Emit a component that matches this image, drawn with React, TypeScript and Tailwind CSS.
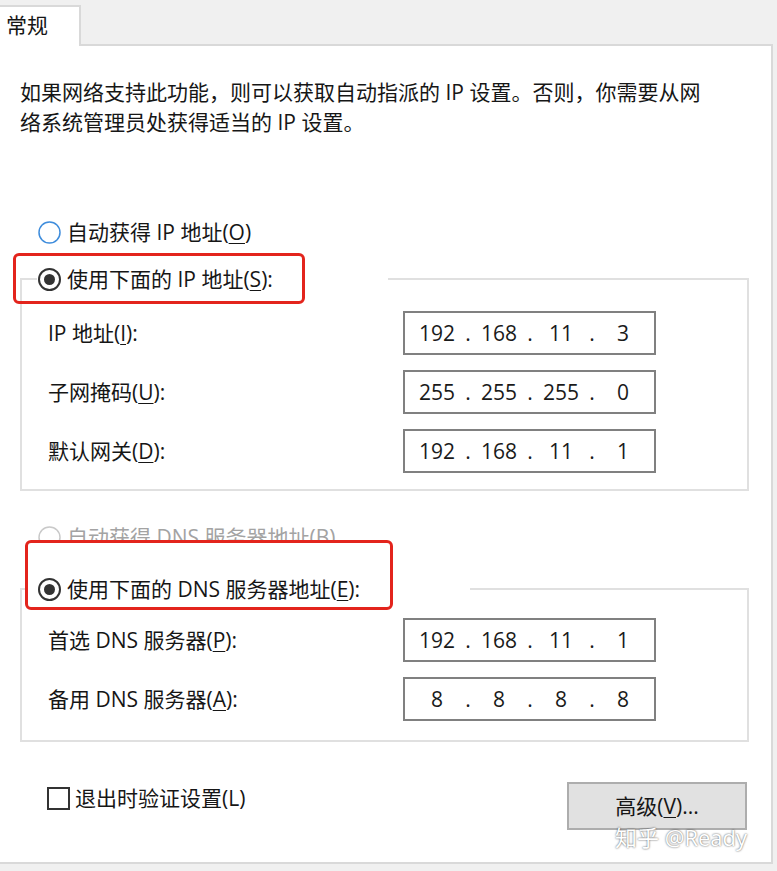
import React from 'react'

type RadioState = 'focus' | 'checked' | 'disabled'

function Radio({ state }: { state: RadioState }) {
  const stroke = state === 'focus' ? '#3f8ddc' : state === 'disabled' ? '#c9c9c9' : '#333333'
  return (
    <svg width="23" height="23" viewBox="0 0 23 23" className="shrink-0">
      <circle cx="11.5" cy="11.5" r="10.5" fill="white" stroke={stroke} strokeWidth={state === 'checked' ? 2 : 1.5} />
      {state === 'checked' && <circle cx="11.5" cy="11.5" r="5.5" fill="#333333" />}
    </svg>
  )
}

function Key({ children }: { children: React.ReactNode }) {
  return <span className="underline decoration-1 underline-offset-[3px]">{children}</span>
}

function IpBox({ parts }: { parts: string[] }) {
  return (
    <div className="flex h-[44px] w-[253px] shrink-0 items-center border-2 border-[#808080] bg-white pl-[4px] text-[#1a1a1a]">
      {parts.map((p, i) => (
        <React.Fragment key={i}>
          {i > 0 && <span className="w-[6px] text-center">.</span>}
          <span className="w-[56px] text-center">{p}</span>
        </React.Fragment>
      ))}
    </div>
  )
}

function Row({ label, parts }: { label: React.ReactNode; parts: string[] }) {
  return (
    <div className="flex items-center">
      <span className="w-[355px] shrink-0">{label}</span>
      <IpBox parts={parts} />
    </div>
  )
}

export default function App() {
  return (
    <div className="h-[871px] w-[777px] overflow-hidden bg-[#f0f0f0] font-['Open_Sans','Noto_Sans_CJK_SC',sans-serif] text-[21px] leading-[30px] text-[#161616]">
      {/* tab strip */}
      <div className="flex h-[46px] w-[773px] items-end">
        <div className="h-[41px] w-[81px] border-t-2 border-r-2 border-[#d9d9d9] bg-white pl-[6px] pt-[3px] text-[21px]">
          常规
        </div>
        <div className="h-full flex-1 border-b-2 border-[#d9d9d9]" />
      </div>

      {/* tab page */}
      <div className="relative h-[818px] w-[773px] border-r-2 border-b-2 border-[#d9d9d9] bg-white">
        <p className="pl-[20px] pt-[31px]">
          如果网络支持此功能，则可以获取自动指派的 IP 设置。否则，你需要从网
          <br />
          络系统管理员处获得适当的 IP 设置。
        </p>

        <div className="mt-[80px] flex h-[30px] items-center gap-[6px] pl-[38px]">
          <Radio state="focus" />
          <span>
            自动获得 IP 地址(<Key>O</Key>)
          </span>
        </div>

        {/* static address group */}
        <fieldset className="mt-[17px] ml-[20px] w-[729px] border-2 border-[#e0e0e0] px-[15px] pt-[17px] pb-[16px]">
          <legend className="relative w-[351px]">
            <div className="pointer-events-none absolute left-[-24px] top-[-11px] h-[51px] w-[292px] rounded-[6px] border-[3px] border-[#e3241c]" />
            <div className="relative flex h-[30px] items-center gap-[6px] pl-[1px]">
              <Radio state="checked" />
              <span>
                使用下面的 IP 地址(<Key>S</Key>):
              </span>
            </div>
          </legend>
          <div className="flex flex-col gap-[15px] pl-[11px]">
            <Row label={<>IP 地址(<Key>I</Key>):</>} parts={['192', '168', '11', '3']} />
            <Row label={<>子网掩码(<Key>U</Key>):</>} parts={['255', '255', '255', '0']} />
            <Row label={<>默认网关(<Key>D</Key>):</>} parts={['192', '168', '11', '1']} />
          </div>
        </fieldset>

        <div className="mt-[31px] flex h-[30px] items-center gap-[6px] pl-[38px] text-[#a3a3a3]">
          <Radio state="disabled" />
          <span>
            自动获得 DNS 服务器地址(<Key>B</Key>)
          </span>
        </div>

        {/* dns group */}
        <fieldset className="mt-[22px] ml-[20px] w-[729px] border-2 border-[#e0e0e0] px-[15px] pt-[14px] pb-[19px]">
          <legend className="relative w-[433px]">
            <div className="pointer-events-none absolute left-[-12px] top-[-34px] h-[70px] w-[368px] rounded-[6px] border-[3px] border-[#e3241c] bg-white" />
            <div className="relative z-10 flex h-[30px] items-center gap-[6px] pl-[1px]">
              <Radio state="checked" />
              <span>
                使用下面的 DNS 服务器地址(<Key>E</Key>):
              </span>
            </div>
          </legend>
          <div className="flex flex-col gap-[15px] pl-[11px]">
            <Row label={<>首选 DNS 服务器(<Key>P</Key>):</>} parts={['192', '168', '11', '1']} />
            <Row label={<>备用 DNS 服务器(<Key>A</Key>):</>} parts={['8', '8', '8', '8']} />
          </div>
        </fieldset>

        <div className="mt-[40px] flex items-start justify-between pl-[47px] pr-[24px]">
          <label className="mt-[1px] flex h-[30px] items-center gap-[5px]">
            <svg width="23" height="23" viewBox="0 0 23 23" className="shrink-0">
              <rect x="1" y="1" width="21" height="21" fill="white" stroke="#333333" strokeWidth="2" />
            </svg>
            <span>退出时验证设置(L)</span>
          </label>
          <button className="h-[48px] w-[180px] border-2 border-[#adadad] bg-[#e1e1e1] text-[#161616]">
            高级(<Key>V</Key>)...
          </button>
        </div>

        <div className="absolute left-[615px] top-[778px] text-[22px] leading-[26px] text-white [text-shadow:0_0_2px_rgba(0,0,0,0.75)]">
          知乎 @Ready
        </div>
      </div>
    </div>
  )
}
